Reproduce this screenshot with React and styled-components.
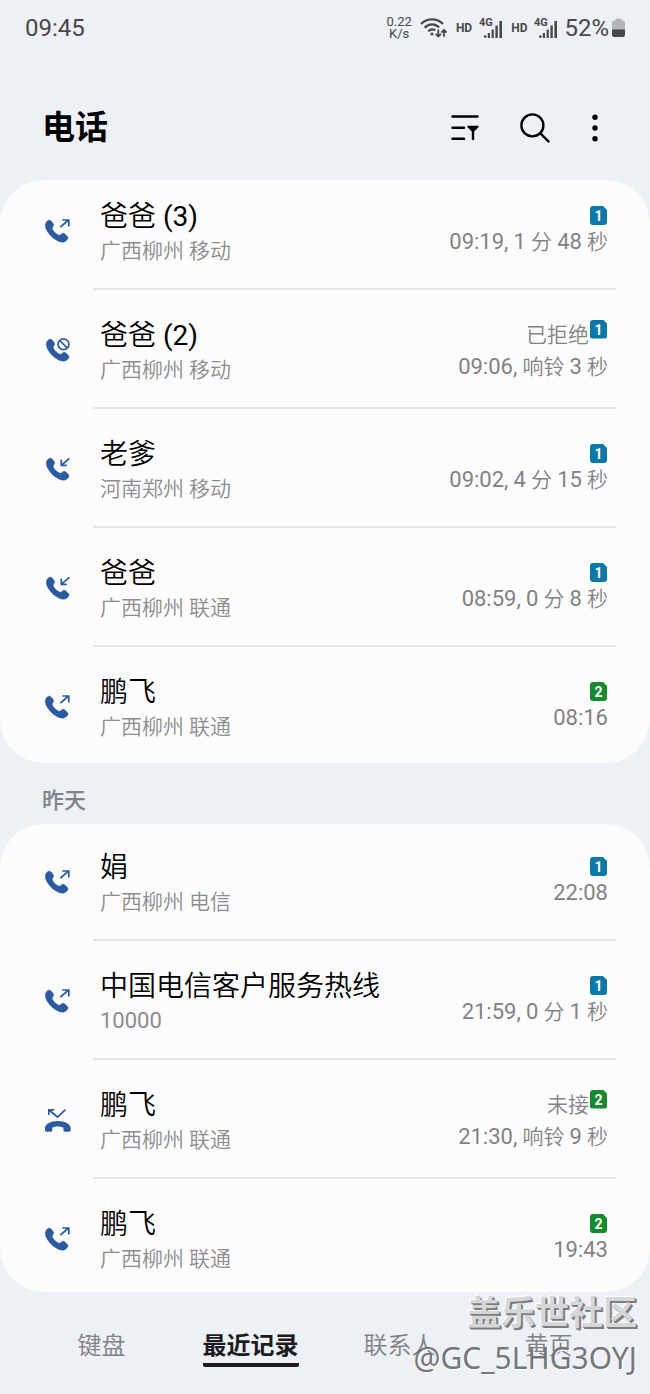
import { useState } from "react";
import styled, { createGlobalStyle } from "styled-components";

const GlobalStyle = createGlobalStyle`
  * {
    box-sizing: border-box;
  }

  body {
    margin: 0;
    background: #edf0f4;
    font-family: Roboto, "Noto Sans CJK SC", sans-serif;
    font-weight: 350;
    color: #000;
  }

  button {
    padding: 0;
    border: 0;
    background: none;
    font: inherit;
    color: inherit;
    cursor: pointer;
  }
`;

const Page = styled.div`
  position: relative;
  min-height: 100vh;
  display: flex;
  flex-direction: column;
`;

const StatusBar = styled.div`
  display: flex;
  align-items: center;
  height: 56px;
  padding: 0 25px;
  color: #46484b;
  font-size: 24px;
  font-weight: 400;
`;

const Clock = styled.time`
  margin-right: auto;
`;

const Speed = styled.span`
  display: flex;
  flex-direction: column;
  margin-right: 8px;
  font-size: 13px;
  line-height: 12px;
  text-align: center;
`;

const Hd = styled.span`
  margin: 0 7px 0 8px;
  font-size: 12px;
  font-weight: 700;
`;

const Percent = styled.span`
  margin: 0 3px 0 6px;
`;

const Header = styled.header`
  display: flex;
  align-items: center;
  height: 124px;
  padding: 20px 40px 0 42px;
`;

const Title = styled.h1`
  margin: 0 auto 0 0;
  font-size: 33px;
  line-height: 40px;
  font-weight: 700;
`;

const IconButton = styled.button`
  display: flex;
  justify-content: center;
  width: 30px;
  margin-left: ${(props) => props.$gap || 0}px;
`;

const Card = styled.section`
  overflow: hidden;
  border-radius: 44px;
  background: #fcfcfd;
`;

/* the list is scrolled a little under the rounded edges of its card */
const List = styled.ul`
  margin: -${(props) => props.$top}px 0 -${(props) => props.$bottom}px;
  padding: 0;
  list-style: none;
`;

const Row = styled.li`
  display: flex;
  align-items: center;
  height: 119px;
  padding: 0 34px 0 44px;
`;

const Body = styled.div`
  flex: 1;
  display: flex;
  align-items: center;
  justify-content: space-between;
  height: 100%;
  margin-left: 21px;
  padding: 2px 8px 0 7px;
  border-bottom: 2px solid #e5e6e8;

  ${Row}:last-child & {
    border-color: transparent;
  }
`;

const Name = styled.div`
  padding-top: 3px;
  font-size: 28px;
  line-height: 38px;
`;

const Count = styled.span`
  font-weight: 400;
`;

const Place = styled.div`
  font-size: 21px;
  line-height: 30px;
  color: #8c8c8e;
`;

const Digits = styled.span`
  font-size: 22px;
  font-weight: 400;
`;

const Meta = styled.div`
  display: flex;
  flex-direction: column;
  align-items: flex-end;
  gap: 4px;
  font-size: 21px;
  line-height: 26px;
  color: #828284;
`;

const StatusLine = styled.div`
  display: flex;
  align-items: flex-start;
  gap: 1px;
  padding-right: 1px;
`;

const Status = styled.span`
  padding: 2px 0;
`;

const Sim = styled.span`
  width: 17px;
  height: 19px;
  border-radius: 3px;
  clip-path: polygon(0 0, 13px 0, 100% 4px, 100% 100%, 0 100%);
  background: ${(props) => (props.$slot === 2 ? "#158a2f" : "#0b78a8")};
  color: #fff;
  font-size: 14px;
  line-height: 20px;
  font-weight: 700;
  text-align: center;
`;

const Day = styled.h2`
  margin: 0;
  padding: 23px 42px 8px;
  font-size: 22px;
  line-height: 30px;
  font-weight: 500;
  color: #808286;
`;

const Tabs = styled.nav`
  display: grid;
  grid-template-columns: repeat(4, 1fr);
  justify-items: center;
  padding: 37px 27px 27px;
`;

const Tab = styled.button`
  && {
    height: 38px;
    border-bottom: 4px solid ${(props) => (props.$active ? "#1c1c20" : "transparent")};
    border-radius: 2px;
    color: ${(props) => (props.$active ? "#1c1c20" : "#808184")};
    font-size: 24px;
    line-height: 34px;
    font-weight: ${(props) => (props.$active ? 700 : 350)};
  }
`;

const Watermark = styled.div`
  position: absolute;
  right: 13px;
  bottom: 14px;
  text-align: right;
  pointer-events: none;
`;

const Community = styled.div`
  font-size: 34px;
  line-height: 45px;
  font-weight: 700;
  color: #d6d7d9;
  text-shadow: 1px 1px 0 #7c7d80, 2px 2px 0 #7c7d80, -1px -1px 0 #fff;
`;

const Author = styled.div`
  font-family: "Noto Sans", sans-serif;
  font-size: 30px;
  line-height: 44px;
  font-weight: 400;
  color: rgba(100, 101, 104, 0.9);
  text-shadow: 1px 1px 0 #fff;
`;

const HANDSET =
  "M5.7 2.2C7.2 2.6 9 4.9 9.6 6.5C10 8 8.2 8.8 8.2 10.2C8.4 12.6 12.7 16.9 15.5 17.2C16.9 17.2 17.6 15.2 19.1 15.2C20.6 15.4 23.5 18.1 24 19.6C24.3 21.6 21.3 24.1 19 24.2C14.8 24.3 9.5 20.9 6.2 17.2C3.2 13.8 1.2 10.2 1.3 7C1.4 4.6 3.6 1.7 5.7 2.2Z";

function CallIcon({ type }) {
  return (
    <svg width="28" height="26" viewBox="0 0 28 26" fill="none" stroke="#2b5a9f" strokeWidth="1.7">
      {type === "missed" ? (
        <path
          d="M1 21.5C1 17.2 6 14 13.8 14S26.7 17.2 26.7 21.5V23C26.7 24.2 26 24.7 25 24.7H21C19.8 24.7 19.4 24 19.4 23V20.6C16.2 19 11.5 19 8.3 20.6V23C8.3 24 7.8 24.7 6.7 24.7H2.7C1.6 24.7 1 24.2 1 23Z"
          fill="#2b5a9f"
          stroke="none"
        />
      ) : (
        <path
          d={HANDSET}
          fill="#2b5a9f"
          stroke="#2b5a9f"
          strokeWidth="0.5"
          transform={type === "out" ? undefined : "translate(1 0)"}
        />
      )}
      {type === "out" && <path d="M16.3 9.2L24.6 2M18.3 2H24.8V8.4" />}
      {type === "in" && <path d="M25.4 2.3L17.5 9.2M17.3 3.5V9.4H22.8" />}
      {type === "rejected" && (
        <>
          <circle cx="19.5" cy="7.3" r="5.4" />
          <path d="M15.7 3.5L23.3 11.1" />
        </>
      )}
      {type === "missed" && <path d="M4.8 8V2.8H10.2M5 3L13.5 10L21.4 2.7" />}
    </svg>
  );
}

function Signal() {
  return (
    <svg width="24" height="24" viewBox="0 0 24 24" fill="#46484b">
      <text x="0" y="10" fontSize="11" fontWeight="700">
        4G
      </text>
      <circle cx="6.3" cy="20.6" r="1.4" />
      <rect x="8.8" y="17" width="2.2" height="5" />
      <rect x="12.6" y="13.5" width="2.2" height="8.5" />
      <rect x="16.4" y="9.5" width="2.4" height="12.5" />
      <rect x="20.4" y="5" width="2.6" height="17" />
    </svg>
  );
}

function WifiIcon() {
  return (
    <svg width="28" height="22" viewBox="0 0 28 22" fill="none" stroke="#46484b" strokeWidth="2.2">
      <path d="M1 7C7 .9 17 .9 23 7M4.6 10.8C9 6.4 15 6.4 19.2 10.5M8.2 14.3C10.5 12 13.2 11.9 15.3 13.3" />
      <circle cx="12" cy="17" r="1.6" fill="#46484b" stroke="none" />
      <path d="M18.3 12.5V19.3M15.7 16.8L18.3 19.5L20.9 16.8M24 19.8V13M21.4 15.6L24 12.9L26.6 15.6" strokeWidth="1.8" />
    </svg>
  );
}

function BatteryIcon() {
  return (
    <svg width="13" height="20" viewBox="0 0 13 20">
      <path d="M3.5 1.5Q3.5.5 4.5.5H8.5Q9.5.5 9.5 1.5V2.5H11Q13 2.5 13 4.5V12H0V4.5Q0 2.5 2 2.5H3.5Z" fill="#b3b5b8" />
      <path d="M0 11.5H13V17Q13 19 11 19H2Q0 19 0 17Z" fill="#46484b" />
    </svg>
  );
}

const today = [
  { type: "out", name: "爸爸", count: 3, place: "广西柳州 移动", sim: 1, time: "09:19, 1 分 48 秒" },
  { type: "rejected", name: "爸爸", count: 2, place: "广西柳州 移动", sim: 1, status: "已拒绝", time: "09:06, 响铃 3 秒" },
  { type: "in", name: "老爹", place: "河南郑州 移动", sim: 1, time: "09:02, 4 分 15 秒" },
  { type: "in", name: "爸爸", place: "广西柳州 联通", sim: 1, time: "08:59, 0 分 8 秒" },
  { type: "out", name: "鹏飞", place: "广西柳州 联通", sim: 2, time: "08:16" },
];

const yesterday = [
  { type: "out", name: "娟", place: "广西柳州 电信", sim: 1, time: "22:08" },
  { type: "out", name: "中国电信客户服务热线", place: "10000", sim: 1, time: "21:59, 0 分 1 秒" },
  { type: "missed", name: "鹏飞", place: "广西柳州 联通", sim: 2, status: "未接", time: "21:30, 响铃 9 秒" },
  { type: "out", name: "鹏飞", place: "广西柳州 联通", sim: 2, time: "19:43" },
];

const tabs = ["键盘", "最近记录", "联系人", "黄页"];

// digits are set slightly larger and heavier than the characters around them
const withDigits = (text) =>
  text
    .split(/([\d:,]+)/)
    .map((part, i) => (i % 2 ? <Digits key={i}>{part}</Digits> : part));

function Calls({ calls, top, bottom }) {
  return (
    <Card>
      <List $top={top} $bottom={bottom}>
        {calls.map((call) => (
          <Row key={call.time}>
            <CallIcon type={call.type} />
            <Body>
              <div>
                <Name>
                  {call.name}
                  {call.count && <Count> ({call.count})</Count>}
                </Name>
                <Place>{withDigits(call.place)}</Place>
              </div>
              <Meta>
                <StatusLine>
                  {call.status && <Status>{call.status}</Status>}
                  <Sim $slot={call.sim}>{call.sim}</Sim>
                </StatusLine>
                <span>{withDigits(call.time)}</span>
              </Meta>
            </Body>
          </Row>
        ))}
      </List>
    </Card>
  );
}

const App = () => {
  const [active, setActive] = useState("最近记录");

  return (
    <>
      <GlobalStyle />
      <Page>
        <StatusBar>
          <Clock>09:45</Clock>
          <Speed>
            <span>0.22</span>
            <span>K/s</span>
          </Speed>
          <WifiIcon />
          <Hd>HD</Hd>
          <Signal />
          <Hd>HD</Hd>
          <Signal />
          <Percent>52%</Percent>
          <BatteryIcon />
        </StatusBar>
        <Header>
          <Title>电话</Title>
          <IconButton aria-label="筛选">
            <svg width="28" height="28" viewBox="0 0 28 28" fill="none" stroke="#000" strokeWidth="2.4" strokeLinecap="round">
              <path d="M1.5 2.5H26.5M1.5 13.7H13M1.5 24.8H13" />
              <path d="M16.6 11.8H27.4Q28 12.8 27 13.8L23.2 17.5V25.5Q22 27 20.8 25.5V17.5L17 13.8Q16 12.8 16.6 11.8Z" fill="#000" stroke="none" />
            </svg>
          </IconButton>
          <IconButton aria-label="搜索" $gap={40}>
            <svg width="30" height="30" viewBox="0 0 30 30" fill="none" stroke="#000" strokeWidth="2.4" strokeLinecap="round">
              <circle cx="12.4" cy="12.4" r="11" />
              <path d="M20.4 20.4L28.5 28.5" />
            </svg>
          </IconButton>
          <IconButton aria-label="更多" $gap={30}>
            <svg width="6" height="28" viewBox="0 0 6 28">
              <circle cx="3" cy="3.2" r="2.7" />
              <circle cx="3" cy="14" r="2.7" />
              <circle cx="3" cy="24.8" r="2.7" />
            </svg>
          </IconButton>
        </Header>
        <Calls calls={today} top={9} bottom={3} />
        <Day>昨天</Day>
        <Calls calls={yesterday} top={2} bottom={6} />
        <Tabs>
          {tabs.map((tab) => (
            <Tab key={tab} $active={tab === active} onClick={() => setActive(tab)}>
              {tab}
            </Tab>
          ))}
        </Tabs>
        <Watermark>
          <Community>盖乐世社区</Community>
          <Author>@GC_5LHG3OYJ</Author>
        </Watermark>
      </Page>
    </>
  );
};

export default App;
